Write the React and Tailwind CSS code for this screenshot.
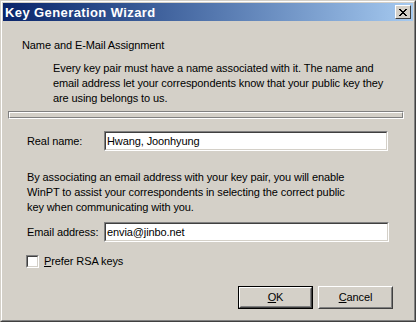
export default function App() {
  const font = { fontFamily: '"Liberation Sans", Arial, sans-serif' };
  return (
    <div className="w-[416px] h-[322px] bg-[#d4d0c8] text-black" style={font}>
      <div className="w-full h-full border border-t-[#d4d0c8] border-l-[#d4d0c8] border-r-[#404040] border-b-[#404040]">
        <div className="w-full h-full border border-t-white border-l-white border-r-[#808080] border-b-[#808080] p-px flex flex-col">
          <div className="h-[18px] flex items-center justify-between bg-gradient-to-r from-[#0a246a] to-[#a6caf0] pl-[2px] pr-[2px]">
            <span className="text-white font-bold text-[13px] leading-none tracking-[0.4px]">Key Generation Wizard</span>
            <div className="w-[16px] h-[14px] bg-[#d4d0c8] border border-t-white border-l-white border-r-[#404040] border-b-[#404040] flex items-center justify-center">
              <svg width="8" height="7" viewBox="0 0 8 7" shapeRendering="crispEdges">
                <path d="M0 0h2v1h-2zM6 0h2v1h-2zM1 1h2v1h-2zM5 1h2v1h-2zM2 2h4v1h-4zM3 3h2v1h-2zM2 4h4v1h-4zM1 5h2v1h-2zM5 5h2v1h-2zM0 6h2v1h-2zM6 6h2v1h-2z" fill="#000" />
              </svg>
            </div>
          </div>
          <div className="flex-1 flex flex-col text-[11px] leading-[15px] tracking-[-0.1px] pt-[17px]">
            <div className="pl-[19px]">Name and E-Mail Assignment</div>
            <div className="pl-[50px] mt-[8px] whitespace-nowrap">
              Every key pair must have a name associated with it. The name and<br />
              email address let your correspondents know that your public key they<br />
              are using belongs to us.
            </div>
            <div className="ml-[5px] w-[396px] h-[8px] mt-[5px] border border-t-[#808080] border-l-[#808080] border-r-white border-b-white">
              <div className="w-full h-full border border-t-white border-l-white border-r-[#808080] border-b-[#808080]"></div>
            </div>
            <div className="flex items-center mt-[12px] pl-[24px]">
              <span className="w-[77px] whitespace-nowrap">Real name:</span>
              <div className="w-[284px] h-[20px] bg-white border border-t-[#808080] border-l-[#808080] border-r-white border-b-white">
                <div className="w-full h-full border border-t-[#404040] border-l-[#404040] border-r-[#d4d0c8] border-b-[#d4d0c8] pl-[1px] flex items-center">Hwang, Joonhyung</div>
              </div>
            </div>
            <div className="pl-[24px] mt-[19px] whitespace-nowrap">
              By associating an email address with your key pair, you will enable<br />
              WinPT to assist your correspondents in selecting the correct public<br />
              key when communicating with you.
            </div>
            <div className="flex items-center mt-[7px] pl-[24px]">
              <span className="w-[77px] whitespace-nowrap">Email address:</span>
              <div className="w-[285px] h-[20px] bg-white border border-t-[#808080] border-l-[#808080] border-r-white border-b-white">
                <div className="w-full h-full border border-t-[#404040] border-l-[#404040] border-r-[#d4d0c8] border-b-[#d4d0c8] pl-[1px] flex items-center">envia@jinbo.net</div>
              </div>
            </div>
            <div className="flex items-center mt-[12px] pl-[23px]">
              <div className="w-[13px] h-[13px] bg-white border border-t-[#808080] border-l-[#808080] border-r-white border-b-white">
                <div className="w-full h-full border border-t-[#404040] border-l-[#404040] border-r-[#d4d0c8] border-b-[#d4d0c8]"></div>
              </div>
              <span className="ml-[5px]"><u>P</u>refer RSA keys</span>
            </div>
            <div className="flex justify-end gap-[5px] mt-[17px] pr-[20px]">
              <div className="w-[75px] h-[23px] border border-black">
                <div className="w-full h-full border border-t-white border-l-white border-r-[#404040] border-b-[#404040]">
                  <div className="w-full h-full border border-t-[#d4d0c8] border-l-[#d4d0c8] border-r-[#808080] border-b-[#808080] flex items-center justify-center"><span><u>O</u>K</span></div>
                </div>
              </div>
              <div className="w-[75px] h-[23px] border border-t-white border-l-white border-r-[#404040] border-b-[#404040]">
                <div className="w-full h-full border border-t-[#d4d0c8] border-l-[#d4d0c8] border-r-[#808080] border-b-[#808080] flex items-center justify-center"><span><u>C</u>ancel</span></div>
              </div>
            </div>
          </div>
        </div>
      </div>
    </div>
  );
}
